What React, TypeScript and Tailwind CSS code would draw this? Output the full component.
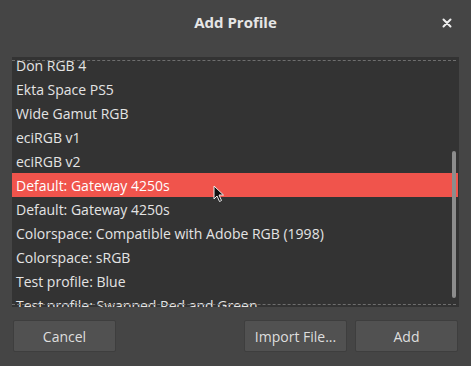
import React from 'react';

const profiles = [
  'Don RGB 4',
  'Ekta Space PS5',
  'Wide Gamut RGB',
  'eciRGB v1',
  'eciRGB v2',
  'Default: Gateway 4250s',
  'Default: Gateway 4250s',
  'Colorspace: Compatible with Adobe RGB (1998)',
  'Colorspace: sRGB',
  'Test profile: Blue',
  'Test profile: Swapped Red and Green',
];

const selected = 5;

export default function App() {
  return (
    <div
      className="w-[471px] h-[366px] bg-[#454545] flex flex-col text-[#e4e4e4]"
      style={{ fontFamily: '"Open Sans", "DejaVu Sans", sans-serif' }}
    >
      {/* Title bar */}
      <div className="relative h-[44px] flex items-center justify-center">
        <span className="text-[15px] font-bold text-[#e6e6e6]">Add Profile</span>
        <button className="absolute right-[19px] top-[18px] w-[10px] h-[10px] flex items-center justify-center">
          <svg width="10" height="10" viewBox="0 0 10 10">
            <path d="M1.5 1.5L8.5 8.5M8.5 1.5L1.5 8.5" stroke="#eeeeee" strokeWidth={2} strokeLinecap="round" />
          </svg>
        </button>
      </div>

      {/* Profile list */}
      <div className="relative mx-3 mt-[13px] h-[250px] w-[447px] bg-[#333333] overflow-hidden">
        <div className="-mt-[4px] flex flex-col">
          {profiles.map((name, i) => (
            <div
              key={i}
              className={`h-6 pl-1 flex items-center text-[14px] whitespace-nowrap ${
                i === selected ? 'bg-[#f0544c] text-white mr-px' : ''
              }`}
            >
              {name}
            </div>
          ))}
        </div>

        {/* undershoot indicators */}
        <div className="absolute left-0 right-[3px] top-[3px] border-t border-dashed border-[#6e6e6e]" />
        <div className="absolute left-0 right-[3px] bottom-[2px] border-t border-dashed border-[#6e6e6e]" />

        {/* scrollbar */}
        <div className="absolute right-[3px] top-[94px] w-[4px] h-[147px] rounded-full bg-[#8c8c8c]" />

        {/* mouse cursor */}
        <svg className="absolute left-[201px] top-[128px]" width="12" height="18" viewBox="0 0 12 18">
          <path d="M1 1L1 14L4 11L6.5 16.5L8.5 15.5L6 10L10.5 10Z" fill="#111" stroke="#eee" strokeWidth={1} strokeLinejoin="round" />
        </svg>
      </div>

      {/* Buttons */}
      <div className="mt-[13px] flex items-center px-[13px] text-[14px]">
        <button className="w-[103px] h-8 bg-[#515151] border border-[#3e3e3e] rounded-[2px] text-[#dedede]">
          Cancel
        </button>
        <div className="flex-1" />
        <button className="w-[103px] h-8 bg-[#515151] border border-[#3e3e3e] rounded-[2px] text-[#dedede]">
          Import File...
        </button>
        <button className="ml-2 w-[103px] h-8 bg-[#515151] border border-[#3e3e3e] rounded-[2px] text-[#dedede]">
          Add
        </button>
      </div>
    </div>
  );
}
